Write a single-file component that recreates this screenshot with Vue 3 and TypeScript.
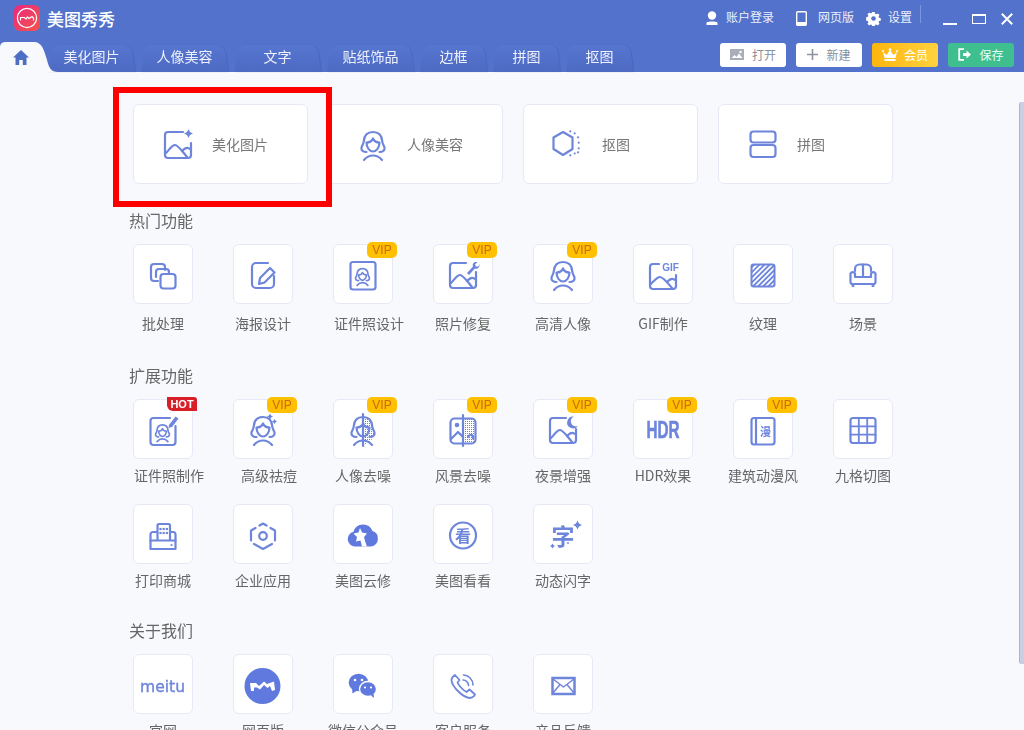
<template>
  <div class="window">
    <header class="header">
      <div class="titlebar">
        <svg class="logo" viewBox="0 0 26 26">
          <defs>
            <linearGradient id="logoFill" x1="0" y1="0" x2="1" y2="1">
              <stop offset="0" stop-color="#e9287f" />
              <stop offset="1" stop-color="#f4554a" />
            </linearGradient>
          </defs>
          <rect width="26" height="26" rx="6" fill="url(#logoFill)" />
          <circle cx="13" cy="13" r="9.600" fill="none" stroke="#fff" stroke-width="1.200" />
          <path d="M6.500 15.500V12.500H10.500L12 14 13.500 12 15 13.500 18 11.500 19.500 13V15.500" fill="none" stroke="#fff" stroke-width="1.200" />
        </svg>
        <span class="app-name">美图秀秀</span>
        <div class="top-actions">
          <span class="top-link account">
            <svg width="12" height="14" viewBox="0 0 12 14"><circle cx="6" cy="4.500" r="4.200" fill="#fff" /><path d="M0.500 14v-2.500c2-1.400 9-1.400 11 0V14z" fill="#fff" /></svg>
            <em>账户登录</em>
          </span>
          <span class="top-link web">
            <svg width="11" height="15" viewBox="0 0 11 15"><rect x=".7" y=".7" width="9.600" height="13.600" rx="1" fill="none" stroke="#fff" stroke-width="1.400" /><rect x=".7" y="11" width="9.600" height="3.300" fill="#fff" /></svg>
            <em>网页版</em>
          </span>
          <span class="top-link settings">
            <svg width="15" height="15" viewBox="0 0 15 15"><path d="M6 0h3l.4 2 1.400.6 1.800-1.100 2 2-1.100 1.800.6 1.400 2 .4v3l-2 .4-.6 1.400 1.100 1.800-2 2-1.800-1.100-1.400.6-.4 2H6l-.4-2-1.400-.6-1.800 1.100-2-2 1.100-1.800-.6-1.400-2-.4V6l2-.4.6-1.400L.4 2.400l2-2 1.800 1.100 1.400-.6z" transform="translate(1.100 1.100) scale(.85)" fill="#fff" /><circle cx="7.500" cy="7.500" r="2.300" fill="#5272cb" /></svg>
            <em>设置</em>
          </span>
          <i class="divider"></i>
          <span class="win-btn min"></span>
          <span class="win-btn max"></span>
          <svg class="win-close" width="12" height="12" viewBox="0 0 12 12"><path d="M.8.800l10.400 10.400M11.200.800L.8 11.200" stroke="#fff" stroke-width="2" /></svg>
        </div>
      </div>
      <div class="tabbar">
        <div class="home-tab">
          <svg class="home-shape" width="58" height="30" viewBox="0 0 58 30"><path d="M0 5Q0 0 6 0H34C42 0 44 8 47 18 49 26 51 30 58 30H0Z" fill="#f8f9fd" /></svg>
          <svg class="home-icon" width="16" height="15" viewBox="0 0 16 15"><path d="M8 0L16 7.500H13.500V15H9.800V10H6.200V15H2.500V7.500H0Z" fill="#4e6ec5" /></svg>
        </div>
        <div v-for="tab in tabs" :key="tab.name" class="tab" :class="{ short: tab.short }">{{ tab.name }}</div>
        <div class="buttons">
          <button class="btn plain">
            <svg width="14" height="11" viewBox="0 0 14 11"><rect width="14" height="11" fill="#a9aebb" /><path d="M1.500 9l3-3 2 2 2.500-3.500L12.500 9z" fill="#fff" /><circle cx="10.500" cy="3" r="1.200" fill="#fff" /></svg>
            打开
          </button>
          <button class="btn plain">
            <svg width="11" height="11" viewBox="0 0 11 11"><path d="M5.500 0v11M0 5.500h11" stroke="#8e93a0" stroke-width="1.600" /></svg>
            新建
          </button>
          <button class="btn vip">
            <svg width="16" height="13" viewBox="0 0 16 13"><path d="M1 4l3.500 3L8 2l3.500 5L15 4l-1.500 6h-11zM2.500 11h11v2h-11z" fill="#fff" /><circle cx="8" cy="1.500" r="1.300" fill="#fff" /><circle cx="1" cy="3" r="1" fill="#fff" /><circle cx="15" cy="3" r="1" fill="#fff" /></svg>
            会员
          </button>
          <button class="btn save">
            <svg width="13" height="13" viewBox="0 0 13 13"><path d="M6 1.200H1.200v10.600H6" fill="none" stroke="#fff" stroke-width="1.800" /><path d="M5 5h3.500V2.500L13 6.500l-4.500 4V8H5z" fill="#fff" /></svg>
            保存
          </button>
        </div>
      </div>
    </header>

    <main class="content">
      <div class="feature-row">
        <div v-for="card in cards" :key="card.name" class="feature-card">
          <svg class="card-icon" viewBox="0 0 60 60" v-html="card.icon"></svg>
          <span>{{ card.name }}</span>
        </div>
      </div>

      <section v-for="group in groups" :key="group.title" class="group" :class="{ loose: group.loose }">
        <h2>{{ group.title }}</h2>
        <div class="tile-grid">
          <div v-for="item in group.items" :key="item.name" class="tile-item">
            <div class="tile">
              <svg class="tile-icon" viewBox="0 0 60 60" v-html="item.icon"></svg>
              <span v-if="item.badge" class="badge" :class="item.badge.toLowerCase()">{{ item.badge }}</span>
            </div>
            <div class="tile-label" :class="{ nudged: item.nudged }">{{ item.name }}</div>
          </div>
        </div>
      </section>

      <div class="highlight"></div>
      <div class="scrollbar"></div>
    </main>
  </div>
</template>

<script setup lang="ts">
interface Tool {
  name: string
  icon: string
  badge?: 'VIP' | 'HOT'
  nudged?: boolean
}

interface Group {
  title: string
  loose?: boolean
  items: Tool[]
}

const C = '#6e85dc'
const base = `fill="none" stroke="${C}" stroke-width="2.200" stroke-linecap="round" stroke-linejoin="round"`
const txt = `fill="${C}" stroke="none" text-anchor="middle"`

const line = (d: string, w = 2.2) => `<path d="${d}" fill="none" stroke="${C}" stroke-width="${w}" stroke-linecap="round" stroke-linejoin="round"/>`
const solid = (d: string) => `<path d="${d}" fill="${C}" stroke="none"/>`
const spark = (x: number, y: number, r: number) => {
  const k = r * 0.22
  return solid(`M${x} ${y - r}Q${x + k} ${y - k} ${x + r} ${y}Q${x + k} ${y + k} ${x} ${y + r}Q${x - k} ${y + k} ${x - r} ${y}Q${x - k} ${y - k} ${x} ${y - r}Z`)
}

const person = (w = 2.2) =>
  line('M23.500 38C20 38 18 36 18.500 33.500 19 31.500 20.500 30.500 20.800 27 21.300 21 25 18 30 18S38.700 21 39.200 27C39.500 30.500 41 31.500 41.500 33.500 42 36 40 38 36.500 38', w) +
  line('M23.500 28.500C23.500 34 27 37.500 30 37.500S36.500 34 36.500 28.500C33.500 28.500 31 27 30 24.500 29 27 26.500 28.500 23.500 28.500Z', w) +
  line('M21 46C23.500 43 26 41.500 30 41.500S36.500 43 39 46', w)

const smallPerson = `<g transform="translate(11.500 13.800) scale(.6)">${person(2.8)}</g>`
const hills = line('M18 39C21 36 24 31 27 31 30 31 34 37 39 43') + line('M34 37C36 35 38 33.500 40 34 41 34.300 42 35 43 35')
const dots = `<pattern id="dotFill" width="2" height="2" patternUnits="userSpaceOnUse"><rect width="1" height="1" fill="${C}"/></pattern>`

const beautify = line('M35 18H20A3 3 0 0 0 17 21V41A3 3 0 0 0 20 44H40A3 3 0 0 0 43 41V29') + hills + spark(40.500, 19.500, 4.500)
const portrait = person()
const cutout =
  '<g transform="translate(-2 0)">' +
  line('M27 18L36.500 23.500V35L27 41 17.500 35V23.500Z') +
  [[34.300, 17.300], [38.700, 19.300], [42, 23.300], [42.700, 28.700], [42.700, 34.300], [42, 38.300], [38.700, 39.500], [34.300, 41.300]]
    .map(([x, y]) => `<circle cx="${x}" cy="${y}" r="1.100" fill="${C}"/>`)
    .join('') +
  '</g>'
const collage = `<rect x="17.500" y="17.500" width="25" height="11" rx="3" ${base}/><rect x="17.500" y="31" width="25" height="12" rx="3" ${base}/>`

const cards: Tool[] = [
  { name: '美化图片', icon: beautify },
  { name: '人像美容', icon: portrait },
  { name: '抠图', icon: cutout },
  { name: '拼图', icon: collage },
]

const tabs = [
  { name: '美化图片' },
  { name: '人像美容' },
  { name: '文字' },
  { name: '贴纸饰品' },
  { name: '边框', short: true },
  { name: '拼图', short: true },
  { name: '抠图', short: true },
]

const groups: Group[] = [
  {
    title: '热门功能',
    loose: true,
    items: [
      {
        name: '批处理',
        icon:
          `<rect x="27.500" y="30" width="15" height="14.500" rx="3" ${base}/>` +
          line('M25 37H21A3 3 0 0 1 18 34V23A3 3 0 0 1 21 20H29A3 3 0 0 1 32 23V26') +
          line('M23 33V28A3 3 0 0 1 26 25H33A3 3 0 0 1 36 28V29'),
      },
      {
        name: '海报设计',
        icon:
          line('M35 19H23A4 4 0 0 0 19 23V40A4 4 0 0 0 23 44H37A4 4 0 0 0 41 40V32') +
          line('M37 24L41.500 28.500 31.500 38.500 26 40 27 34Z'),
      },
      {
        name: '证件照设计',
        badge: 'VIP',
        nudged: true,
        icon: `<rect x="17.500" y="18" width="25" height="27.500" rx="2.500" ${base}/>` + smallPerson,
      },
      {
        name: '照片修复',
        badge: 'VIP',
        icon:
          line('M33 19H20A3 3 0 0 0 17 22V41A3 3 0 0 0 20 44H40A3 3 0 0 0 43 41V28') +
          hills +
          solid('M34 29L40 22.500C39 19.500 41 17.500 44.500 18L42 20.500 43 22.500 45.300 22.500 46.500 20C46.800 23.500 44.500 25.500 41.800 24.500L36 31Z'),
      },
      { name: '高清人像', badge: 'VIP', icon: portrait },
      {
        name: 'GIF制作',
        icon:
          line('M26 20H20A3 3 0 0 0 17 23V42A3 3 0 0 0 20 45H40A3 3 0 0 0 43 42V31') +
          line('M18 40C21 37 24 33 27 33 30 33 34 38 39 44') +
          line('M34 38C36 36 38 34.500 40 35 41 35.300 42 36 43 36') +
          `<text x="37.500" y="27" font-family="Liberation Sans, sans-serif" font-weight="700" font-size="10" ${txt}>GIF</text>`,
      },
      {
        name: '纹理',
        icon:
          `<pattern id="hatch" width="3.600" height="3.600" patternUnits="userSpaceOnUse" patternTransform="rotate(45)"><rect width="1.800" height="3.600" fill="${C}"/></pattern>` +
          `<rect x="18.500" y="20.500" width="23" height="22" rx="2" fill="url(#hatch)" stroke="${C}" stroke-width="2"/>`,
      },
      {
        name: '场景',
        icon:
          line('M22 27V25A4.500 4.500 0 0 1 26.500 20.500H33.500A4.500 4.500 0 0 1 38 25V27') +
          line('M30 20.500V33M22 33H38M22 33V29.500A2.500 2.500 0 0 0 17.500 29.500V38A2 2 0 0 0 19.500 40H40.500A2 2 0 0 0 42.500 38V29.500A2.500 2.500 0 0 0 38 29.500V33') +
          line('M19.500 42H20.500M39.500 42H40.500'),
      },
    ],
  },
  {
    title: '扩展功能',
    items: [
      {
        name: '证件照制作',
        badge: 'HOT',
        nudged: true,
        icon:
          line('M37 19H20A3 3 0 0 0 17.500 22V43A3 3 0 0 0 20 46H40A3 3 0 0 0 42.500 43V27') +
          `<g transform="translate(11.500 15) scale(.6)">${person(2.8)}</g>` +
          solid('M36 26L42.500 17.500 45.500 19.500 39 28 35.500 29Z'),
      },
      {
        name: '高级祛痘',
        badge: 'VIP',
        nudged: true,
        icon: person() + spark(37, 17.500, 3) + spark(41.500, 22.500, 2.500),
      },
      {
        name: '人像去噪',
        badge: 'VIP',
        icon:
          dots +
          `<path d="M30 18C34 18 38.700 21 39.200 27 39.500 30.500 41 33 41 35 41 38 38 44 30 46Z" fill="url(#dotFill)"/>` +
          person() +
          line('M30 15V47'),
      },
      {
        name: '风景去噪',
        badge: 'VIP',
        icon:
          `<pattern id="dotFill2" width="2" height="2" patternUnits="userSpaceOnUse"><rect width="1" height="1" fill="${C}"/></pattern>` +
          `<rect x="30" y="20" width="12" height="23" fill="url(#dotFill2)"/>` +
          `<rect x="17.500" y="19.500" width="25" height="25" rx="4" ${base}/>` +
          `<circle cx="24" cy="26" r="2.300" fill="${C}"/>` +
          line('M18 40L25 33 30 38') +
          line('M35 38C37 34.500 41 36 40 39.500') +
          line('M30 16V47'),
      },
      {
        name: '夜景增强',
        badge: 'VIP',
        icon:
          line('M33 19H20A3 3 0 0 0 17 22V41A3 3 0 0 0 20 44H40A3 3 0 0 0 43 41V30') +
          hills +
          solid('M41 17.500A6 6 0 1 0 45 27 5 5 0 0 1 41 17.500Z'),
      },
      {
        name: 'HDR效果',
        badge: 'VIP',
        icon: `<text x="30" y="39" font-family="Liberation Sans, sans-serif" font-weight="700" font-size="23" textLength="33" lengthAdjust="spacingAndGlyphs" fill="${C}" stroke="${C}" stroke-width=".6" text-anchor="middle">HDR</text>`,
      },
      {
        name: '建筑动漫风',
        badge: 'VIP',
        icon:
          `<rect x="18.500" y="19" width="23" height="26.500" rx="2.500" ${base}/>` +
          line('M23 19V45') +
          `<text x="32.500" y="36.500" font-family="Noto Sans CJK SC, sans-serif" font-weight="700" font-size="11" ${txt}>漫</text>`,
      },
      {
        name: '九格切图',
        icon: `<rect x="17.500" y="19" width="25" height="25" rx="2.500" ${base}/>` + line('M25.800 19V44M34.200 19V44M17.500 27.300H42.500M17.500 35.700H42.500', 1.800),
      },
      {
        name: '打印商城',
        icon:
          line('M24 28H20A2.500 2.500 0 0 0 17.500 30.500V45H42.500V30.500A2.500 2.500 0 0 0 40 28H37') +
          line('M24.500 36V21.500A1.500 1.500 0 0 1 26 20H35.500A1.500 1.500 0 0 1 37 21.500V36') +
          line('M17.500 36.500H42.500') +
          [[27.500, 25], [30.700, 25], [33.900, 25], [27.500, 29], [30.700, 29], [33.900, 29]]
            .map(([x, y]) => `<rect x="${x - 1.1}" y="${y - 1.1}" width="2.200" height="2.200" fill="${C}"/>`)
            .join('') +
          `<circle cx="38.500" cy="41" r="1.100" fill="${C}"/>`,
      },
      {
        name: '企业应用',
        icon:
          line('M26.500 21.500L30 19.500 33.500 21.500M37.500 24L42 26.500V36.500M18 36.500V26.500L22.500 24') +
          line('M21 40L30 45 39 40') +
          `<circle cx="30" cy="32" r="3.800" ${base}/>`,
      },
      {
        name: '美图云修',
        icon:
          `<path d="M22 42.500A7.500 7.500 0 0 1 20.500 27.700 10 10 0 0 1 39.500 27 8 8 0 0 1 38 42.500Z" fill="#6079de"/>` +
          `<path d="M27 24L29 28.500 34 29.500 31 33 32 37 34 42.500H29L27.500 36.500 23 37.500 24 33 20.500 29.500 25.500 28.500Z" fill="#fff"/>`,
      },
      {
        name: '美图看看',
        icon:
          `<circle cx="30" cy="31.500" r="13" ${base}/>` +
          `<text x="30" y="37.500" font-family="Noto Sans CJK SC, sans-serif" font-weight="700" font-size="16" ${txt}>看</text>`,
      },
      {
        name: '动态闪字',
        icon:
          `<text x="30" y="41" font-family="Noto Sans CJK SC, sans-serif" font-weight="700" font-size="23" ${txt}>字</text>` +
          spark(44.500, 21, 4.500) +
          spark(19.500, 42, 2.500) +
          spark(35, 39, 1.500),
      },
    ],
  },
  {
    title: '关于我们',
    items: [
      {
        name: '官网',
        icon: `<text x="29.500" y="38" font-family="DejaVu Sans, sans-serif" font-size="16" textLength="45" lengthAdjust="spacingAndGlyphs" fill="${C}" stroke="${C}" stroke-width=".4" text-anchor="middle">meitu</text>`,
      },
      {
        name: '网页版',
        icon:
          `<circle cx="29.500" cy="32" r="18" fill="#6079de"/>` +
          `<path d="M17 29L23 29 26 32 31 27.500 34 30 41 27.500 42 36 39 37 37 32 34.500 34 31 31 27 35.500 24 33.500H21V37L18 37Z" fill="#fff"/>`,
      },
      {
        name: '微信公众号',
        icon:
          `<ellipse cx="25.500" cy="28.500" rx="9.800" ry="8.800" fill="#6079de"/>` +
          `<path d="M19 34L19.500 39.500 25 36Z" fill="#6079de"/>` +
          `<ellipse cx="35" cy="35" rx="8.500" ry="7.500" fill="#6079de" stroke="#fff" stroke-width="1.300"/>` +
          `<path d="M38 41.500L41 44 40.500 39Z" fill="#6079de"/>` +
          `<circle cx="22" cy="26" r="1.300" fill="#fff"/><circle cx="29" cy="26" r="1.300" fill="#fff"/>` +
          `<circle cx="32" cy="33.500" r="1.100" fill="#fff"/><circle cx="38" cy="33.500" r="1.100" fill="#fff"/>`,
      },
      {
        name: '客户服务',
        icon:
          line('M22 21C20.500 22 18.500 23.500 18.500 26 18.500 32 30 44 37 44 39 44 41.500 42 42 40.500L36.500 35.500 33.500 38C30.500 36.500 26 32 24.500 28.500L26.500 26Z', 1.800) +
          line('M30 26C33 26 35.500 28.500 35.500 31.500M30.500 21C35.500 21 40 25.500 40 31', 1.600),
      },
      {
        name: '产品反馈',
        icon:
          `<rect x="19.500" y="24" width="22" height="16" fill="none" stroke="${C}" stroke-width="2.500"/>` +
          line('M20 25L30.500 33 41 25M20 39L27 30.500M41 39L34 30.500', 1.500),
      },
    ],
  },
]
</script>

<style>
html,
body {
  margin: 0;
  overflow: hidden;
  background: #f8f9fd;
}
</style>

<style scoped>
.window {
  position: relative;
  width: 1024px;
  height: 730px;
  overflow: hidden;
  font-family: "Noto Sans CJK SC", "Liberation Sans", sans-serif;
  color: #666;
  background: #f8f9fd;
}

.header {
  height: 72px;
  background: #5272cb;
}

.titlebar {
  display: flex;
  align-items: center;
  height: 42px;
  padding: 0 11px 6px 14px;
  box-sizing: border-box;
  color: #fff;
}

.logo {
  width: 26px;
  height: 26px;
}

.app-name {
  margin-left: 7px;
  font-size: 17px;
  font-weight: 500;
}

.top-actions {
  display: flex;
  align-items: center;
  margin-left: auto;
  font-size: 12px;
}

.top-link {
  display: flex;
  align-items: center;
  gap: 8px;
  color: #eef1fb;
}

.top-link em {
  padding-bottom: 3px;
  font-style: normal;
}

.web {
  margin-left: 22px;
  gap: 11px;
}

.settings {
  margin-left: 12px;
  gap: 7px;
}

.divider {
  width: 1px;
  height: 18px;
  margin: -8px 0 0 8px;
  background: #7d95da;
}

.win-btn {
  display: block;
  box-sizing: border-box;
}

.min {
  width: 14px;
  height: 2px;
  margin: 11px 0 0 22px;
  background: #fff;
}

.max {
  width: 14px;
  height: 10px;
  margin: 2px 0 0 15px;
  border: 1px solid #fff;
  border-top-width: 2px;
}

.win-close {
  margin: 2px 0 0 15px;
}

.tabbar {
  position: relative;
  display: flex;
  align-items: flex-start;
  height: 30px;
}

.home-tab {
  position: relative;
  z-index: 1;
  width: 45px;
  height: 30px;
  flex: none;
}

.home-shape {
  position: absolute;
  left: 0;
  top: 0;
}

.home-icon {
  position: absolute;
  left: 13px;
  top: 8px;
}

.tab {
  position: relative;
  z-index: 0;
  isolation: isolate;
  width: 93px;
  height: 30px;
  flex: none;
  line-height: 28px;
  text-align: center;
  font-size: 14px;
  color: #eef1fb;
}

.tab.short {
  width: 73px;
}

.tab::before {
  content: "";
  position: absolute;
  inset: 0 3px;
  z-index: -1;
  border-radius: 10px 10px 0 0;
  background: linear-gradient(#5676d0, #4e6ac3);
  box-shadow: 1px 0 1px rgba(60, 85, 170, 0.45);
  transform: perspective(50px) rotateX(9deg);
  transform-origin: bottom;
}

.buttons {
  display: flex;
  gap: 10px;
  margin: 1px 10px 0 auto;
}

.btn {
  display: flex;
  align-items: center;
  justify-content: center;
  gap: 8px;
  width: 66px;
  height: 24px;
  padding: 0 0 1px;
  border: 0;
  border-radius: 3px;
  font-family: inherit;
  font-size: 12px;
}

.plain {
  background: #fff;
  color: #8a8f9c;
}

.vip {
  gap: 6px;
  background: linear-gradient(90deg, #ffb60f, #ffd23f);
  color: #fff;
}

.save {
  background: #3fbf90;
  color: #e8fff5;
}

.content {
  position: relative;
  height: 658px;
  padding: 32px 0 0 133px;
  box-sizing: border-box;
}

.feature-row {
  display: flex;
  gap: 20px;
}

.feature-card {
  display: flex;
  align-items: center;
  gap: 4px;
  width: 175px;
  height: 80px;
  padding-left: 14px;
  box-sizing: border-box;
  background: #fff;
  border: 1px solid #e6e8f5;
  border-radius: 6px;
  font-size: 14px;
  color: #777;
}

.card-icon {
  width: 60px;
  height: 60px;
  flex: none;
}

.group {
  margin-top: 29px;
}

.group:last-of-type {
  margin-top: 30px;
}

.feature-row + .group {
  margin-top: 26px;
}

.group h2 {
  margin: 0 0 14px -4px;
  font-size: 16px;
  font-weight: 400;
  line-height: 20px;
  color: #666;
}

.tile-grid {
  display: grid;
  grid-template-columns: repeat(8, 60px);
  column-gap: 40px;
  row-gap: 19px;
}

.tile {
  position: relative;
  width: 60px;
  height: 60px;
  box-sizing: border-box;
  background: #fff;
  border: 1px solid #e6e8f5;
  border-radius: 6px;
}

.tile-icon {
  position: absolute;
  left: -1px;
  top: -1px;
  width: 60px;
  height: 60px;
}

.badge {
  position: absolute;
  right: -5px;
  top: -3px;
  width: 30px;
  height: 16px;
  border-radius: 5px;
  background: #ffc000;
  color: #c96a10;
  font: 12px/16px "Liberation Sans", sans-serif;
  text-align: center;
}

.badge.hot {
  height: 14px;
  border-radius: 0 3px 0 6px;
  background: #d81e26;
  color: #fff;
  font-weight: 700;
  font-size: 11px;
  line-height: 14px;
}

.tile-label {
  width: 100px;
  margin: 6px 0 0 -20px;
  font-size: 14px;
  line-height: 20px;
  text-align: center;
  white-space: nowrap;
  color: #666;
}

.tile-label.nudged {
  margin-left: -14px;
}

.loose .tile-label {
  margin-top: 9px;
  margin-bottom: 3px;
}

.highlight {
  position: absolute;
  left: 113px;
  top: 15px;
  width: 219px;
  height: 120px;
  box-sizing: border-box;
  border: 6px solid #f00;
}

.scrollbar {
  position: absolute;
  right: 0;
  top: 30px;
  width: 5px;
  height: 562px;
  box-sizing: border-box;
  border-left: 1px solid #aab5d0;
  border-radius: 3px 0 0 3px;
  background: #c9d0e3;
}
</style>
